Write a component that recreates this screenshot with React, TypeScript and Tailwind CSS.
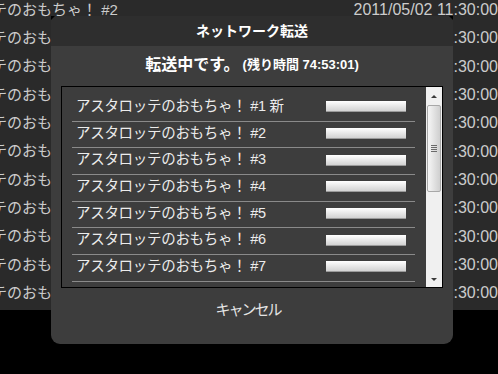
import React from "react";

const FONT = "font-['Liberation_Sans','Noto_Sans_CJK_JP',sans-serif]";

const BG_ROWS = Array.from({ length: 11 }, (_, i) => i + 2);
const ITEMS = [1, 2, 3, 4, 5, 6, 7];

function Arrow({ up }: { up?: boolean }) {
  return (
    <span
      className={`block h-0 w-0 border-x-[3px] border-x-transparent ${
        up ? "border-b-[3px] border-b-[#3a3a3a]" : "border-t-[3px] border-t-[#3a3a3a]"
      }`}
    />
  );
}

export default function App() {
  return (
    <div className={`relative h-[374px] w-[498px] overflow-hidden bg-black ${FONT}`}>
      {/* list behind the dialog */}
      <div className="h-[310px] overflow-hidden bg-[#2a2a2a]">
        <div className="mt-[-4px]">
          {BG_ROWS.map((n) => (
            <div key={n} className="flex h-[28.3px] items-center justify-between whitespace-nowrap text-[#cccccc]">
              <span className="ml-[-83px] text-[15px]">アスタロッテのおもちゃ！ #{n}</span>
              <span className="text-[16px]">2011/05/02 11:30:00</span>
            </div>
          ))}
        </div>
      </div>

      {/* dialog */}
      <div className="absolute left-[51px] top-[16px] flex h-[328px] w-[402px] flex-col overflow-hidden rounded-b-[9px] bg-[#3d3d3d]">
        <span className="absolute left-0 top-0 h-0 w-0 border-r-[4px] border-t-[4px] border-r-transparent border-t-black" />
        <span className="absolute right-0 top-0 h-0 w-0 border-l-[4px] border-t-[4px] border-l-transparent border-t-black" />

        <div className="flex h-[30px] items-center justify-center bg-[#2e2e2e] text-[14px] font-bold text-white">
          ネットワーク転送
        </div>

        <div className="flex h-[40px] items-center justify-center pb-[3px] font-bold text-white">
          <span className="text-[16px]">転送中です。</span>
          <span className="ml-[3px] text-[13px]">(残り時間 74:53:01)</span>
        </div>

        <div className="mx-[10px] flex h-[202px] border border-black">
          <div className="flex-1 overflow-hidden pl-[10px] pr-[11px] pt-[8px]">
            {ITEMS.map((n) => (
              <div
                key={n}
                className="flex h-[26.7px] items-center justify-between border-b border-[#8a8a8a] pb-[2px] pl-[4px] pr-[9px]"
              >
                <span className="whitespace-nowrap text-[14.5px] tracking-[-0.3px] text-[#ececec]">
                  アスタロッテのおもちゃ！ #{n}
                  {n === 1 && " 新"}
                </span>
                <span className="h-[11px] w-[80px] border-b border-[#9a9a9a] bg-linear-to-b from-white to-[#d2d2d2]" />
              </div>
            ))}
          </div>

          <div className="flex w-[16px] flex-col bg-[#f0f0f0]">
            <div className="flex h-[18px] items-center justify-center">
              <Arrow up />
            </div>
            <div className="mx-[1px] flex h-[87px] flex-col items-center justify-center gap-[1px] rounded-[2px] border border-[#a8a8a8] bg-linear-to-r from-[#f6f6f6] to-[#cfcfcf]">
              <span className="h-px w-[6px] bg-[#6a6a6a]" />
              <span className="h-px w-[6px] bg-[#6a6a6a]" />
              <span className="h-px w-[6px] bg-[#6a6a6a]" />
              <span className="h-px w-[6px] bg-[#6a6a6a]" />
            </div>
            <div className="flex-1" />
            <div className="flex h-[16px] items-center justify-center">
              <Arrow />
            </div>
          </div>
        </div>

        <div className="flex h-[44px] items-center justify-center pr-[8px] text-[15px] tracking-[-2px] text-[#e4e4e4]">
          キャンセル
        </div>
      </div>
    </div>
  );
}
